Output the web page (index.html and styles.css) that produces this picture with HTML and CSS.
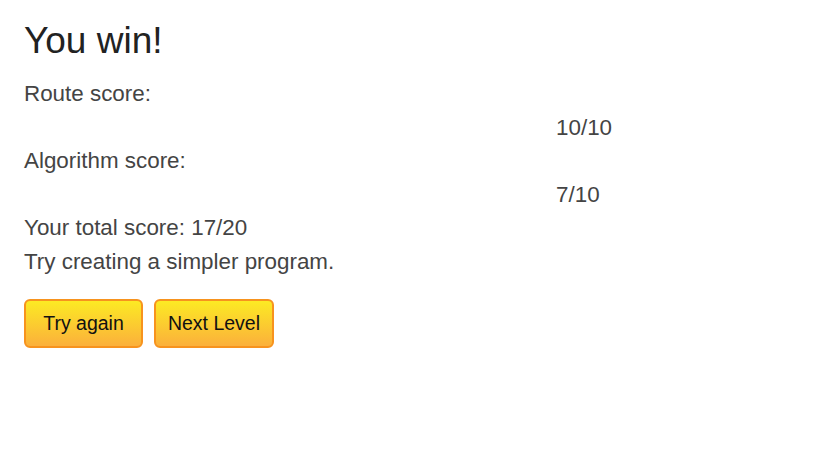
FILE: index.html
```html
<!DOCTYPE html>
<html>
<head>
<meta charset="utf-8">
<link rel="stylesheet" href="styles.css">
</head>
<body>
<div class="page">
  <h1 class="title">You win!</h1>
  <div class="scores">
    <div class="label">Route score:</div>
    <div class="value">10/10</div>
    <div class="label">Algorithm score:</div>
    <div class="value">7/10</div>
    <div class="label">Your total score: 17/20</div>
    <div class="label">Try creating a simpler program.</div>
  </div>
  <div class="actions">
    <button class="btn btn-first">Try again</button>
    <button class="btn">Next Level</button>
  </div>
</div>
</body>
</html>
```
FILE: styles.css
```css
html, body {
  margin: 0;
  padding: 0;
  background: #ffffff;
}
.page {
  padding: 19px 24px 0 24px;
  font-family: "Liberation Sans", Arial, sans-serif;
  color: #444444;
}
.title {
  margin: 0;
  font-size: 37px;
  font-weight: normal;
  line-height: 43px;
  color: #222222;
}
.scores {
  margin-top: 15px;
  font-size: 22.4px;
  line-height: 33.6px;
}
.value {
  padding-left: 532px;
}
.actions {
  display: flex;
  gap: 11px;
  margin-top: 20px;
}
.btn {
  box-sizing: border-box;
  width: 120px;
  height: 49px;
  padding: 0;
  font-family: "Liberation Sans", Arial, sans-serif;
  font-size: 19.5px;
  line-height: 22px;
  color: #111111;
  text-align: center;
  border: 2px solid #f7931e;
  border-radius: 6px;
  background: linear-gradient(to bottom, #fcea24 0%, #fbb03b 100%);
}
.btn-first {
  width: 119px;
}
```
